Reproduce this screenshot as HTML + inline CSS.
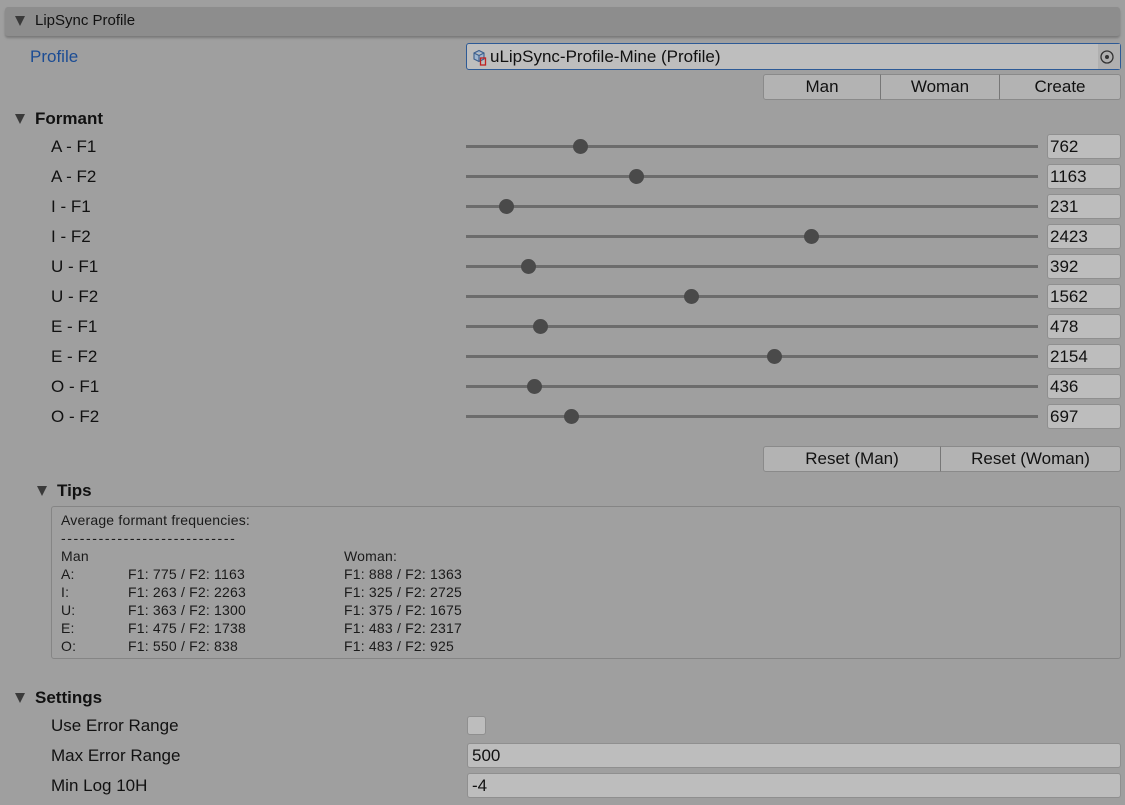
<!DOCTYPE html>
<html><head><meta charset="utf-8"><style>
body{margin:0;width:1125px;height:805px;background:#9f9f9f;font-family:"Liberation Sans",sans-serif;color:#111;position:relative;overflow:hidden}
.a{position:absolute;white-space:nowrap}
.hdr{left:5px;top:7px;width:1115px;height:29px;background:#8d8d8d;border-radius:3px;box-shadow:0 2px 2px #7a7a7a}
.tri{width:0;height:0;border-left:5.5px solid transparent;border-right:5.5px solid transparent;border-top:10px solid #3a3a3a}
.lbl{font-size:17px;line-height:20px}
.b{font-weight:bold}
.track{left:466px;width:572px;height:3px;background:#6c6c6c}
.knob{width:15px;height:15px;border-radius:50%;background:#4a4a4a}
.fld{background:#bdbdbd;border:1px solid #8f8f8f;border-radius:3px;font-size:17px;line-height:23px;padding-left:2px;box-sizing:border-box}
.btn{background:#b3b3b3;border:1px solid #8a8a8a;box-sizing:border-box;font-size:17px;text-align:center;line-height:24px}
.tip{font-size:14px;line-height:18px;color:#1a1a1a;letter-spacing:0.2px}
</style></head><body>
<div class="a hdr"></div>
<div class="a tri" style="left:15px;top:16px"></div>
<div class="a" style="left:35px;top:12px;font-size:15px;line-height:18px;color:#111">LipSync Profile</div>

<div class="a lbl" style="left:30px;top:47px;color:#1b4c94">Profile</div>
<div class="a" style="left:466px;top:43px;width:655px;height:27px;background:#bebebe;border:1px solid #2d5a96;border-radius:3px;box-sizing:border-box"></div>
<div class="a" style="left:1098px;top:44px;width:22px;height:25px;background:#b0b0b0"></div>
<svg class="a" style="left:1099px;top:49px" width="16" height="16"><circle cx="8" cy="8" r="6" fill="none" stroke="#333" stroke-width="1.3"/><circle cx="8" cy="8" r="2" fill="#333"/></svg>
<svg class="a" style="left:472px;top:49px" width="18" height="18"><path d="M2 4 L7 1.5 L12 4 L12 10 L7 12.5 L2 10Z M2 4 L7 6.5 L12 4 M7 6.5 L7 12.5" fill="#9fb6d0" stroke="#3c5e8c" stroke-width="1.1"/><rect x="8.5" y="9" width="5" height="7" fill="none" stroke="#c02020" stroke-width="1.3"/></svg>
<div class="a lbl" style="left:490px;top:47px">uLipSync-Profile-Mine (Profile)</div>

<div class="a btn" style="left:763px;top:74px;width:118px;height:26px;border-radius:3px 0 0 3px">Man</div>
<div class="a btn" style="left:880px;top:74px;width:120px;height:26px;border-left:1px solid #777">Woman</div>
<div class="a btn" style="left:999px;top:74px;width:122px;height:26px;border-radius:0 3px 3px 0;border-left:1px solid #777">Create</div>

<div class="a tri" style="left:15px;top:114px"></div>
<div class="a lbl b" style="left:35px;top:109px">Formant</div>

<div class="a lbl" style="left:51px;top:137px">A - F1</div><div class="a track" style="top:145px"></div><div class="a knob" style="left:573px;top:139px"></div><div class="a fld" style="left:1047px;top:134px;width:74px;height:25px">762</div>
<div class="a lbl" style="left:51px;top:167px">A - F2</div><div class="a track" style="top:175px"></div><div class="a knob" style="left:629px;top:169px"></div><div class="a fld" style="left:1047px;top:164px;width:74px;height:25px">1163</div>
<div class="a lbl" style="left:51px;top:197px">I - F1</div><div class="a track" style="top:205px"></div><div class="a knob" style="left:499px;top:199px"></div><div class="a fld" style="left:1047px;top:194px;width:74px;height:25px">231</div>
<div class="a lbl" style="left:51px;top:227px">I - F2</div><div class="a track" style="top:235px"></div><div class="a knob" style="left:804px;top:229px"></div><div class="a fld" style="left:1047px;top:224px;width:74px;height:25px">2423</div>
<div class="a lbl" style="left:51px;top:257px">U - F1</div><div class="a track" style="top:265px"></div><div class="a knob" style="left:521px;top:259px"></div><div class="a fld" style="left:1047px;top:254px;width:74px;height:25px">392</div>
<div class="a lbl" style="left:51px;top:287px">U - F2</div><div class="a track" style="top:295px"></div><div class="a knob" style="left:684px;top:289px"></div><div class="a fld" style="left:1047px;top:284px;width:74px;height:25px">1562</div>
<div class="a lbl" style="left:51px;top:317px">E - F1</div><div class="a track" style="top:325px"></div><div class="a knob" style="left:533px;top:319px"></div><div class="a fld" style="left:1047px;top:314px;width:74px;height:25px">478</div>
<div class="a lbl" style="left:51px;top:347px">E - F2</div><div class="a track" style="top:355px"></div><div class="a knob" style="left:767px;top:349px"></div><div class="a fld" style="left:1047px;top:344px;width:74px;height:25px">2154</div>
<div class="a lbl" style="left:51px;top:377px">O - F1</div><div class="a track" style="top:385px"></div><div class="a knob" style="left:527px;top:379px"></div><div class="a fld" style="left:1047px;top:374px;width:74px;height:25px">436</div>
<div class="a lbl" style="left:51px;top:407px">O - F2</div><div class="a track" style="top:415px"></div><div class="a knob" style="left:564px;top:409px"></div><div class="a fld" style="left:1047px;top:404px;width:74px;height:25px">697</div>

<div class="a btn" style="left:763px;top:446px;width:178px;height:26px;border-radius:3px 0 0 3px">Reset (Man)</div>
<div class="a btn" style="left:940px;top:446px;width:181px;height:26px;border-radius:0 3px 3px 0;border-left:1px solid #777">Reset (Woman)</div>

<div class="a tri" style="left:37px;top:486px"></div>
<div class="a lbl b" style="left:57px;top:481px">Tips</div>
<div class="a" style="left:51px;top:506px;width:1070px;height:153px;border:1px solid #858585;border-radius:3px;box-sizing:border-box;background:#a0a0a0"></div>
<div class="a tip" style="left:61px;top:511px">Average formant frequencies:</div>
<div class="a tip" style="left:61px;top:529px;letter-spacing:1.6px">----------------------------</div>
<div class="a tip" style="left:61px;top:547px">Man<br>A:<br>I:<br>U:<br>E:<br>O:</div>
<div class="a tip" style="left:128px;top:565px">F1: 775 / F2: 1163<br>F1: 263 / F2: 2263<br>F1: 363 / F2: 1300<br>F1: 475 / F2: 1738<br>F1: 550 / F2: 838</div>
<div class="a tip" style="left:344px;top:547px">Woman:<br>F1: 888 / F2: 1363<br>F1: 325 / F2: 2725<br>F1: 375 / F2: 1675<br>F1: 483 / F2: 2317<br>F1: 483 / F2: 925</div>

<div class="a tri" style="left:15px;top:693px"></div>
<div class="a lbl b" style="left:35px;top:688px">Settings</div>
<div class="a lbl" style="left:51px;top:716px">Use Error Range</div>
<div class="a" style="left:467px;top:716px;width:19px;height:19px;background:#bdbdbd;border:1px solid #8f8f8f;border-radius:3px;box-sizing:border-box"></div>
<div class="a lbl" style="left:51px;top:746px">Max Error Range</div>
<div class="a fld" style="left:467px;top:743px;width:654px;height:25px;padding-left:4px">500</div>
<div class="a lbl" style="left:51px;top:776px">Min Log 10H</div>
<div class="a fld" style="left:467px;top:773px;width:654px;height:25px;padding-left:4px">-4</div>
</body></html>
